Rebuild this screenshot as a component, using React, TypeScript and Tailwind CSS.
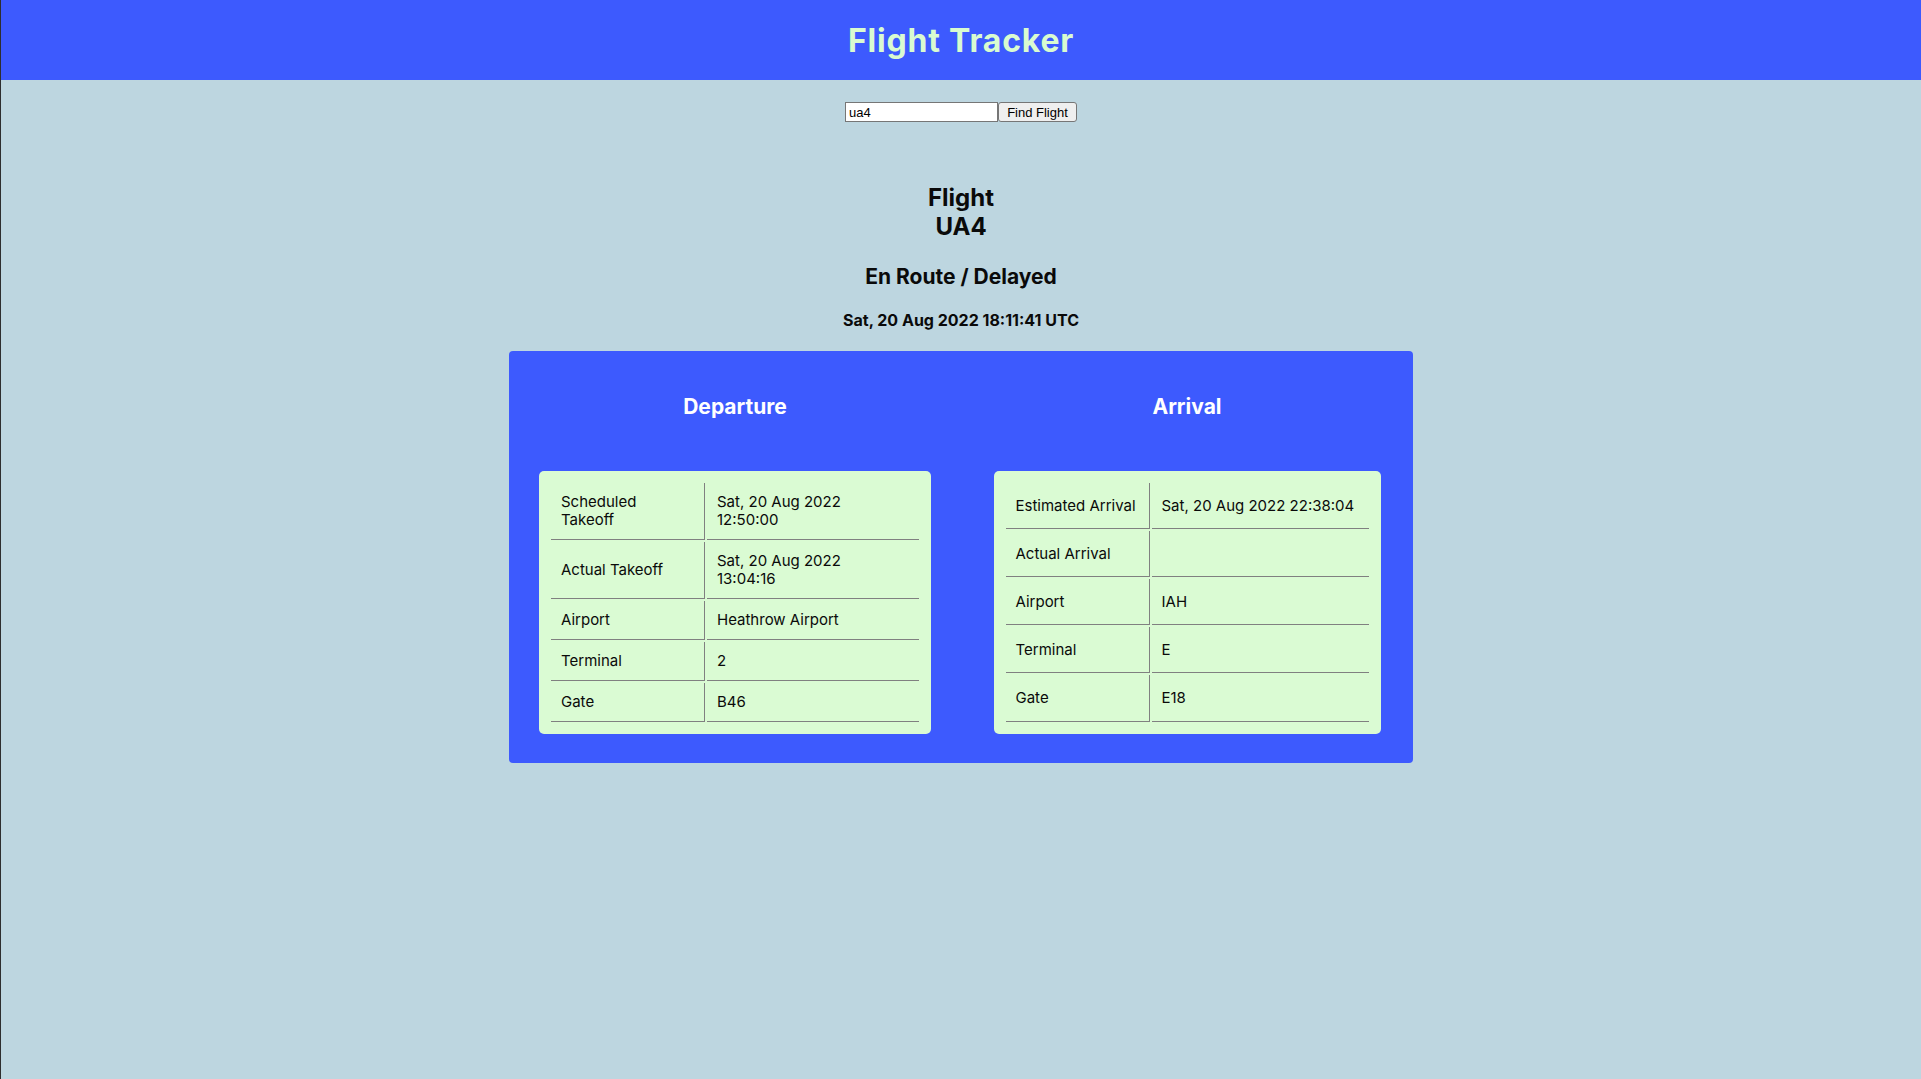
import React from "react";

const font = { fontFamily: "Inter, 'Noto Sans', sans-serif" };

type Row = { label: React.ReactNode; value: React.ReactNode };

function Panel({
  rows,
  col1,
  col2,
  rowH,
}: {
  rows: Row[];
  col1: string;
  col2: string;
  rowH: string[];
}) {
  return (
    <div className="rounded-[5px] bg-[#dafbd3] p-[10px]">
      <table className="border-separate border-spacing-[2px] text-[15px] leading-[18px] text-[#0a0a0a]">
        <tbody>
          {rows.map((r, i) => (
            <tr key={i} className={rowH[i]}>
              <td
                className={`${col1} border-b border-r border-[#808080] px-[10px] py-[10px] align-middle`}
              >
                {r.label}
              </td>
              <td
                className={`${col2} border-b border-[#808080] px-[10px] py-[10px] align-middle`}
              >
                {r.value}
              </td>
            </tr>
          ))}
        </tbody>
      </table>
    </div>
  );
}

export default function App() {
  const dep: Row[] = [
    { label: <>Scheduled<br />Takeoff</>, value: <>Sat, 20 Aug 2022<br />12:50:00</> },
    { label: "Actual Takeoff", value: <>Sat, 20 Aug 2022<br />13:04:16</> },
    { label: "Airport", value: "Heathrow Airport" },
    { label: "Terminal", value: "2" },
    { label: "Gate", value: "B46" },
  ];
  const arr: Row[] = [
    { label: <span className="whitespace-nowrap">Estimated Arrival</span>, value: <span className="whitespace-nowrap">Sat, 20 Aug 2022 22:38:04</span> },
    { label: "Actual Arrival", value: "" },
    { label: "Airport", value: "IAH" },
    { label: "Terminal", value: "E" },
    { label: "Gate", value: "E18" },
  ];
  return (
    <div
      className="min-h-screen border-l border-[#2e2e2e] bg-[#bdd6e0] text-[#0a0a0a]"
      style={font}
    >
      <header className="flex h-[80px] items-center justify-center bg-[#3d5afe] pt-[2px]">
        <h1 className="text-[32px] font-bold tracking-[0.8px] text-[#d9fbd0]">
          Flight Tracker
        </h1>
      </header>

      <div className="mt-[22px] flex justify-center">
        <input
          defaultValue="ua4"
          className="h-[20px] w-[153px] border border-[#767676] bg-white px-[3px] text-[13px] text-black"
          style={{ fontFamily: "'Liberation Sans', Arial, sans-serif" }}
        />
        <button
          className="h-[20px] w-[79px] rounded-[3px] border border-[#767676] bg-[#efefef] text-[13px] text-black"
          style={{ fontFamily: "'Liberation Sans', Arial, sans-serif" }}
        >
          Find Flight
        </button>
      </div>

      <div className="mt-[61px] flex flex-col items-center text-center">
        <h2 className="text-[24px] font-bold leading-[29px]">
          Flight
          <br />
          UA4
        </h2>
        <h3 className="mt-[23px] text-[21px] font-bold leading-[25px]">
          En Route / Delayed
        </h3>
        <p className="mt-[21px] text-[16px] font-bold leading-[20px]">
          Sat, 20 Aug 2022 18:11:41 UTC
        </p>
      </div>

      <div className="mx-auto mt-[21px] grid w-[904px] grid-cols-2 rounded-[4px] bg-[#3d5afe] pb-[29px]">
        <div className="flex flex-col items-center">
          <h3 className="mb-[52px] mt-[43px] text-[21px] font-bold leading-[25px] text-white">
            Departure
          </h3>
          <Panel
            rows={dep}
            col1="w-[154px]"
            col2="w-[212px]"
            rowH={["h-[57px]", "h-[57px]", "h-[39px]", "h-[39px]", "h-[39px]"]}
          />
        </div>
        <div className="flex flex-col items-center">
          <h3 className="mb-[52px] mt-[43px] text-[21px] font-bold leading-[25px] text-white">
            Arrival
          </h3>
          <Panel
            rows={arr}
            col1="w-[144px]"
            col2="w-[217px]"
            rowH={["h-[46px]", "h-[46px]", "h-[46px]", "h-[46px]", "h-[47px]"]}
          />
        </div>
      </div>
    </div>
  );
}
